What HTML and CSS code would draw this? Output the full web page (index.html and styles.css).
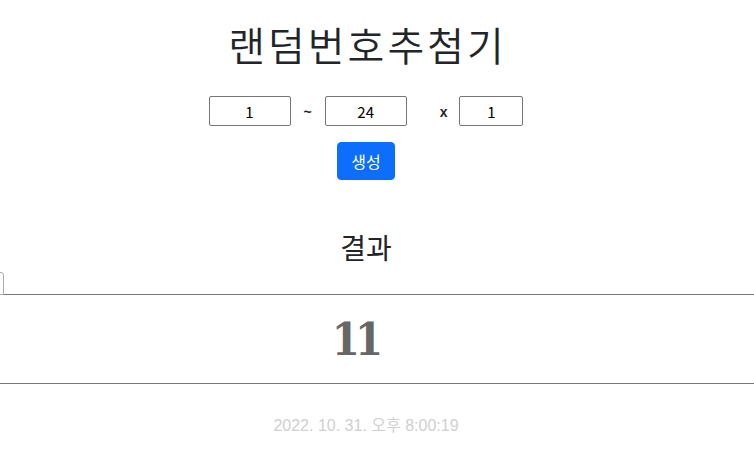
FILE: index.html
```html
<!DOCTYPE html>
<html lang="ko">
<head>
<meta charset="utf-8">
<title>랜덤번호추첨기</title>
<link rel="stylesheet" href="styles.css">
</head>
<body>
<div class="edge-tab"></div>
<main class="wrap">
  <h1 class="title">랜덤번호추첨기</h1>
  <div class="controls">
    <input class="num" type="text" value="1">
    <span class="sep tilde">~</span>
    <input class="num" type="text" value="24">
    <span class="sep times">x</span>
    <input class="num small" type="text" value="1">
  </div>
  <div class="actions">
    <button class="btn" type="button">생성</button>
  </div>
  <h3 class="result-title">결과</h3>
</main>
<div class="result">
  <div class="result-num">11</div>
</div>
<div class="date">2022. 10. 31. 오후 8:00:19</div>
</body>
</html>
```
FILE: styles.css
```css
* { box-sizing: border-box; }
html, body { margin: 0; padding: 0; background: #fff; }
body {
  font-family: "Liberation Sans", "Noto Sans CJK KR", sans-serif;
  color: #212529;
  width: 754px;
  overflow: hidden;
}
.wrap {
  width: 732px;
  text-align: center;
  display: flex;
  flex-direction: column;
  align-items: center;
}
.title {
  margin: 20px 0 0;
  padding-left: 3px;
  font-family: "Noto Sans CJK KR", sans-serif;
  font-weight: 350;
  font-size: 40px;
  line-height: 48px;
  letter-spacing: 3px;
}
.controls {
  margin-top: 28px;
  display: flex;
  align-items: center;
}
.num {
  width: 82px;
  height: 30px;
  border: 1px solid #767676;
  border-radius: 2px;
  font-family: "Noto Sans CJK KR", sans-serif;
  font-size: 15px;
  text-align: center;
  color: #000;
  padding: 0 4px;
  outline: none;
}
.num.small { width: 64px; }
.sep {
  font-family: "Liberation Sans", sans-serif;
  font-weight: 700;
  font-size: 14px;
  color: #212529;
  position: relative;
  top: 1px;
}
.tilde { margin: 0 13px 0 13px; }
.times { margin: 0 12px 0 33px; }
.actions { margin-top: 16px; }
.btn {
  font-family: "Noto Sans CJK KR", sans-serif;
  font-size: 16px;
  line-height: 24px;
  padding: 6px 12px;
  color: #fff;
  background: #0d6efd;
  border: 1px solid #0d6efd;
  border-radius: 4px;
  height: 38px;
  width: 58px;
}
.result-title {
  margin: 50px 0 0;
  font-family: "Noto Sans CJK KR", sans-serif;
  font-weight: 400;
  font-size: 28px;
  line-height: 34px;
}
.result {
  margin-top: 30px;
  border-top: 1px solid #777;
  border-bottom: 1px solid #777;
  height: 90px;
  display: flex;
  align-items: center;
  justify-content: center;
  padding-right: 44px;
}
.result-num {
  font-family: "DejaVu Serif", serif;
  font-stretch: condensed;
  font-weight: 700;
  font-size: 45px;
  letter-spacing: -5px;
  color: #666;
  line-height: 1;
}
.date {
  width: 732px;
  margin-top: 30px;
  text-align: center;
  font-size: 16px;
  line-height: 24px;
  color: #d0d0d0;
}
.edge-tab {
  position: absolute;
  left: -10px;
  top: 272px;
  width: 14px;
  height: 23px;
  border: 1px solid #aaa;
  border-radius: 0 3px 0 0;
  background: #fff;
}
```
